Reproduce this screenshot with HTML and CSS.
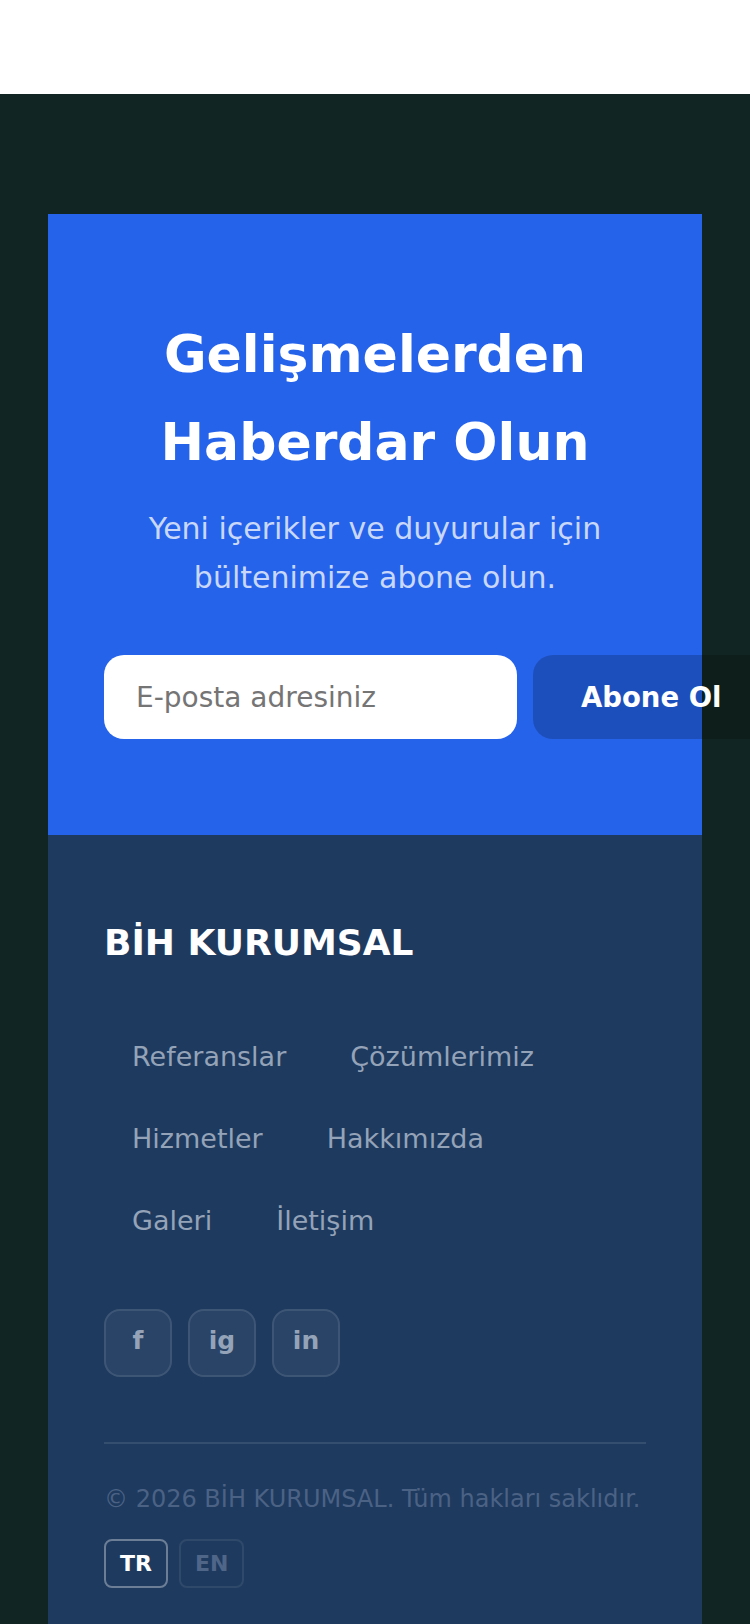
FILE: index.html
```html
<!DOCTYPE html>
<html lang="tr">
<head>
    <meta charset="UTF-8">
    <meta name="viewport" content="width=device-width, initial-scale=1.0">
    <title>BİH KURUMSAL</title>
    <link rel="stylesheet" href="styles.css">
</head>
<body>
    <div class="topbar"></div>

    <main class="page">
        <div class="card">
            <section class="newsletter">
                <h2>Gelişmelerden Haberdar Olun</h2>
                <p class="lead">Yeni içerikler ve duyurular için bültenimize abone olun.</p>
                <form class="subscribe" onsubmit="return false">
                    <input type="email" placeholder="E-posta adresiniz">
                    <button type="submit">Abone Ol</button>
                </form>
            </section>

            <footer class="footer">
                <div class="brand">BİH KURUMSAL</div>
                <nav class="links">
                    <a href="#">Referanslar</a>
                    <a href="#">Çözümlerimiz</a>
                    <a href="#">Hizmetler</a>
                    <a href="#">Hakkımızda</a>
                    <a href="#">Galeri</a>
                    <a href="#">İletişim</a>
                </nav>
                <div class="social">
                    <a href="#">f</a>
                    <a href="#">ig</a>
                    <a href="#">in</a>
                </div>
                <div class="bottom">
                    <p class="copy">© 2026 BİH KURUMSAL. Tüm hakları saklıdır.</p>
                    <div class="lang">
                        <button class="active">TR</button>
                        <button>EN</button>
                    </div>
                </div>
            </footer>
        </div>
    </main>
</body>
</html>
```

FILE: styles.css
```css
body {
    margin: 0;
    font-family: "DejaVu Sans", sans-serif;
    background-color: #112622;
    color: white;
}
.topbar {
    height: 94px;
    background-color: white;
}
.page {
    padding: 120px 48px 0;
}
.card {
    background-color: #1e3a5f;
}
.newsletter {
    background-color: #2563eb;
    padding: 96px 56px;
    text-align: center;
}
h2 {
    margin: 0 0 19px;
    font-size: 52px;
    line-height: 88px;
    font-weight: bold;
}
.lead {
    margin: 0 0 53px;
    font-size: 30px;
    line-height: 48.5px;
    color: #c9d8fa;
}
.subscribe {
    display: flex;
    gap: 16px;
}
.subscribe input {
    flex: 0 0 411px;
    box-sizing: border-box;
    height: 84px;
    padding: 0 32px;
    border: none;
    border-radius: 20px;
    font-family: inherit;
    font-size: 28px;
    color: #333;
    background: white;
}
.subscribe input::placeholder {
    color: #757575;
}
.subscribe button {
    flex-shrink: 0;
    height: 84px;
    padding: 0 48px;
    border: none;
    border-radius: 20px;
    background-color: rgba(0, 0, 0, 0.2);
    color: white;
    font-family: inherit;
    font-size: 27.5px;
    font-weight: bold;
    white-space: nowrap;
}
.footer {
    padding: 77px 56px 60px;
}
.brand {
    font-size: 36px;
    line-height: 61px;
    font-weight: bold;
    margin-bottom: 50px;
}
.links {
    display: flex;
    flex-wrap: wrap;
    column-gap: 8px;
    row-gap: 14px;
    max-width: 500px;
}
.links a {
    padding: 12px 28px;
    font-size: 27px;
    line-height: 44px;
    color: #94a3b8;
    text-decoration: none;
}
.social {
    display: flex;
    gap: 16px;
    margin-top: 54px;
}
.social a {
    box-sizing: border-box;
    width: 68px;
    height: 68px;
    padding-bottom: 5px;
    display: flex;
    align-items: center;
    justify-content: center;
    border: 2px solid rgba(255, 255, 255, 0.1);
    border-radius: 16px;
    background-color: rgba(255, 255, 255, 0.05);
    color: #94a3b8;
    font-size: 25px;
    font-weight: bold;
    text-decoration: none;
}
.bottom {
    margin-top: 65px;
    border-top: 2px solid rgba(255, 255, 255, 0.1);
    padding-top: 35px;
}
.copy {
    margin: 0 0 19px;
    font-size: 24px;
    line-height: 41px;
    color: #4b6285;
}
.lang {
    display: flex;
    gap: 11px;
}
.lang button {
    padding: 4px 14px;
    border: 2px solid rgba(255, 255, 255, 0.08);
    border-radius: 8px;
    background: none;
    color: #4f6689;
    font-family: inherit;
    font-size: 22px;
    line-height: 37px;
    font-weight: bold;
}
.lang button.active {
    border-color: rgba(255, 255, 255, 0.35);
    color: white;
}
```
